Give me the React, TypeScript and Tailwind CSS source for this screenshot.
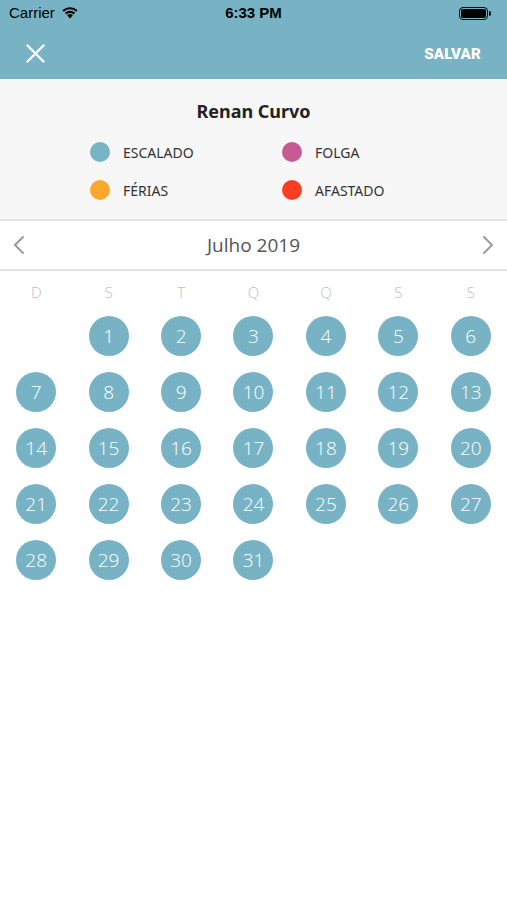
const LEGEND = [
  { label: "ESCALADO", color: "bg-[#77b4c6]" },
  { label: "FOLGA", color: "bg-[#c65a93]" },
  { label: "FÉRIAS", color: "bg-[#fca82c]" },
  { label: "AFASTADO", color: "bg-[#fb3d23]" },
];

const WEEKDAYS = ["D", "S", "T", "Q", "Q", "S", "S"];

// julho 2019 começa numa segunda
const OFFSET = 1;
const DAYS = Array.from({ length: 31 }, (_, i) => i + 1);

export default function App() {
  const cells: (number | null)[] = [
    ...Array.from({ length: OFFSET }, () => null),
    ...DAYS,
  ];

  return (
    <div className="w-[507px] h-[900px] bg-white font-['Noto_Sans',sans-serif] overflow-hidden">
      {/* status bar + nav */}
      <div className="bg-[#77b3c5]">
        <div className="h-[27px] relative flex items-center px-[9px] text-[15px] text-black font-['Liberation_Sans',sans-serif]">
          <span>Carrier</span>
          <svg width="18" height="13" viewBox="0 0 18 13" className="ml-[6px] -mt-[2px]">
            <path d="M9 12.5 L6.2 9.3 A4 4 0 0 1 11.8 9.3 Z" fill="#000" />
            <path d="M3.9 6.8 A7.4 7.4 0 0 1 14.1 6.8 L12.6 8.4 A5.2 5.2 0 0 0 5.4 8.4 Z" fill="#000" />
            <path d="M1.4 4.2 A11 11 0 0 1 16.6 4.2 L15.1 5.8 A8.8 8.8 0 0 0 2.9 5.8 Z" fill="#000" />
          </svg>
          <span className="absolute left-0 right-0 text-center font-bold">6:33 PM</span>
          <div className="ml-auto mr-[7px] flex items-center">
            <div className="w-[29px] h-[13px] rounded-[4px] border border-black p-[1px]">
              <div className="w-full h-full rounded-[2px] bg-black" />
            </div>
            <div className="w-[2px] h-[5px] bg-black rounded-r-sm ml-[1px]" />
          </div>
        </div>
        <div className="h-[52px] flex items-center justify-between pl-[26px] pr-[26px]">
          <svg width="19" height="19" viewBox="0 0 19 19">
            <path d="M1.5 1.5 L17.5 17.5 M17.5 1.5 L1.5 17.5" stroke="#fff" strokeWidth="2.4" strokeLinecap="round" />
          </svg>
          <span className="text-white font-['Roboto',sans-serif] font-black text-[15px] tracking-[0.2px] mt-[2px]">
            SALVAR
          </span>
        </div>
      </div>

      {/* header */}
      <div className="bg-[#f7f7f7] h-[142px] pt-[19px] border-b-2 border-[#e2e2e2]">
        <div className="text-center text-[18px] font-bold text-[#222] leading-[26px]">Renan Curvo</div>
        <div className="grid grid-cols-[192px_1fr] gap-y-[18px] mt-[18px] pl-[90px]">
          {LEGEND.map((l) => (
            <div key={l.label} className="flex items-center h-[20px]">
              <div className={`w-[20px] h-[20px] rounded-full ${l.color}`} />
              <span className="ml-[13px] text-[14px] text-[#333]">{l.label}</span>
            </div>
          ))}
        </div>
      </div>

      {/* month nav */}
      <div className="h-[50px] flex items-center justify-between px-[12px] border-b-2 border-[#e2e2e2]">
        <svg width="14" height="20" viewBox="0 0 14 20">
          <path d="M11 2 L3 10 L11 18" stroke="#9a9a9a" strokeWidth="2" fill="none" strokeLinecap="round" />
        </svg>
        <span className="text-[19px] text-[#555] font-['Open_Sans',sans-serif] leading-none">Julho 2019</span>
        <svg width="14" height="20" viewBox="0 0 14 20">
          <path d="M3 2 L11 10 L3 18" stroke="#9a9a9a" strokeWidth="2" fill="none" strokeLinecap="round" />
        </svg>
      </div>

      {/* weekdays */}
      <div className="grid grid-cols-7 pt-[11px] h-[31px]">
        {WEEKDAYS.map((d, i) => (
          <div key={i} className="text-center text-[15px] leading-[20px] text-[#bdbdbd] font-['Open_Sans',sans-serif] font-light">
            {d}
          </div>
        ))}
      </div>

      {/* days */}
      <div className="grid grid-cols-7 pt-[6px]">
        {cells.map((d, i) => (
          <div key={i} className="h-[56px] flex items-center justify-center">
            {d !== null && (
              <div className="w-[40px] h-[40px] rounded-full bg-[#77b3c5] flex items-center justify-center text-white text-[19px] font-['Open_Sans',sans-serif] font-light">
                {d}
              </div>
            )}
          </div>
        ))}
      </div>
    </div>
  );
}
